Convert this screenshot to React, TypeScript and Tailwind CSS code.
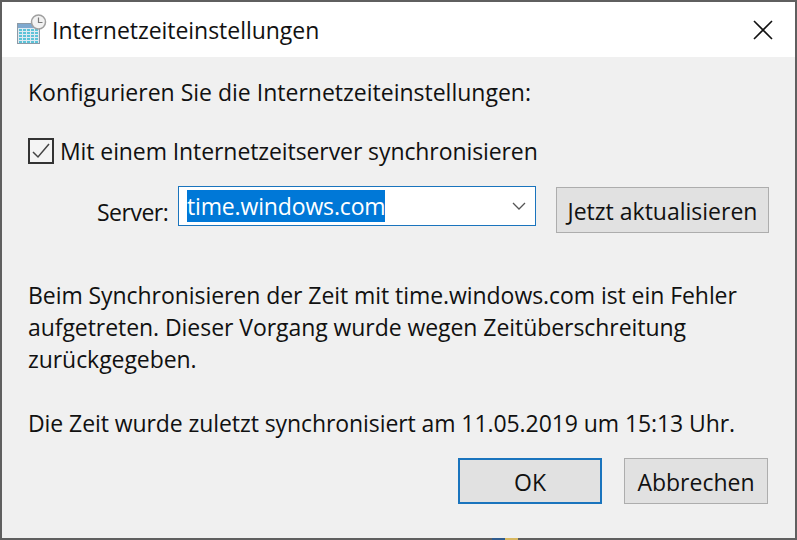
const FONT = "font-['Open_Sans','Noto_Sans',sans-serif]";

function ClockCalendarIcon() {
  return (
    <svg width="32" height="32" viewBox="0 0 32 32" className="shrink-0">
      <rect x="1.5" y="9.5" width="22" height="20" fill="#dfeaf2" stroke="#8d9aa6" />
      <rect x="2" y="10" width="21" height="4" fill="#7fa9cf" />
      {[3, 7, 11, 15, 19].map((x) =>
        [15, 18, 21, 24, 27].map((y) => <rect key={`${x}-${y}`} x={x} y={y} width="3" height="2" fill="#5cc3d8" />),
      )}
      <circle cx="22.5" cy="8" r="7" fill="#f2f2f2" stroke="#a0a0a0" strokeWidth="1.5" />
      <path d="M22.5 3.5V8.5H26.5" fill="none" stroke="#7a7a7a" strokeWidth="1.2" />
    </svg>
  );
}

function DialogButton({ label, focused }: { label: string; focused?: boolean }) {
  return (
    <button
      type="button"
      className={`flex h-[46px] w-full items-center justify-center bg-[#e1e1e1] pt-[2px] text-[23px] leading-none text-[#111] ${
        focused ? 'border-2 border-[#1a74bd]' : 'border border-[#adadad]'
      }`}
    >
      {label}
    </button>
  );
}

export default function App() {
  return (
    <div className={`h-[540px] w-[797px] overflow-hidden bg-[#5f5f5f] ${FONT}`}>
      <div className="ml-[2px] mt-[2px] h-[536px] w-[793px] bg-[#f0f0f0] text-[23px] leading-[32px] text-[#111]">
        {/* Title bar */}
        <div className="flex h-[55px] items-center bg-white pl-[14px] pr-[22px]">
          <ClockCalendarIcon />
          <span className="ml-[4px] flex-1 tracking-[-0.04px]">Internetzeiteinstellungen</span>
          <svg width="20" height="20" viewBox="0 0 20 20" fill="none" stroke="#111" strokeWidth="1.6">
            <path d="M1 1l18 18M19 1L1 19" />
          </svg>
        </div>

        {/* Body */}
        <div className="flex flex-col pl-[26px] pr-[26px]">
          <p className="mt-[19px]">Konfigurieren Sie die Internetzeiteinstellungen:</p>

          <div className="mt-[27px] flex items-center">
            <span className="flex h-[26px] w-[26px] items-center justify-center border-2 border-[#333] bg-[#f4f4f4]">
              <svg width="20" height="20" viewBox="0 0 20 20" fill="none" stroke="#444" strokeWidth="1.5">
                <path d="M2 11l5 5L18 3" />
              </svg>
            </span>
            <span className="ml-[6px] tracking-[-0.09px]">Mit einem Internetzeitserver synchronisieren</span>
          </div>

          <div className="mt-[19px] flex items-start">
            <span className="ml-[69px] mt-[10px] w-[81px] tracking-[-0.5px]">Server:</span>
            <div className="flex h-[40px] w-[358px] items-center justify-between border border-[#1a74bd] bg-white pl-[8px] pr-[8px]">
              <span className="bg-[#0078d7] leading-[32px] tracking-[-0.15px] text-white">time.windows.com</span>
              <svg width="16" height="16" viewBox="0 0 16 16" fill="none" stroke="#555" strokeWidth="1.3">
                <path d="M2 5l6 6 6-6" />
              </svg>
            </div>
            <div className="ml-[20px] mt-[1px] w-[213px]">
              <DialogButton label="Jetzt aktualisieren" />
            </div>
          </div>

          <p className="mt-[46px] tracking-[-0.06px]">
            Beim Synchronisieren der Zeit mit time.windows.com ist ein Fehler
            <br />
            aufgetreten. Dieser Vorgang wurde wegen Zeitüberschreitung
            <br />
            zurückgegeben.
          </p>

          <p className="mt-[32px] tracking-[-0.08px]">Die Zeit wurde zuletzt synchronisiert am 11.05.2019 um 15:13 Uhr.</p>

          <div className="mt-[19px] flex justify-end gap-[22px] pr-[1px]">
            <div className="w-[144px]">
              <DialogButton label="OK" focused />
            </div>
            <div className="w-[144px]">
              <DialogButton label="Abbrechen" />
            </div>
          </div>
        </div>
      </div>

      {/* Window behind the dialog, just showing under its bottom edge */}
      <div className="ml-[492px] flex h-[2px]">
        <span className="w-[13px] bg-[#2f5c8f]" />
        <span className="w-[13px] bg-[#d8b860]" />
      </div>
    </div>
  );
}
